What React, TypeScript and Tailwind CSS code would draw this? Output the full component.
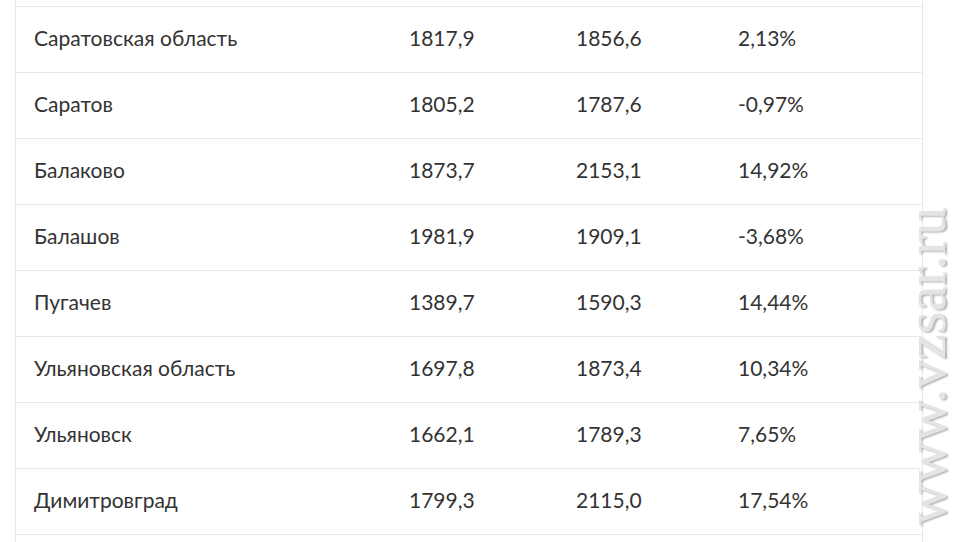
const rows = [
  ['Саратовская область', '1817,9', '1856,6', '2,13%'],
  ['Саратов', '1805,2', '1787,6', '-0,97%'],
  ['Балаково', '1873,7', '2153,1', '14,92%'],
  ['Балашов', '1981,9', '1909,1', '-3,68%'],
  ['Пугачев', '1389,7', '1590,3', '14,44%'],
  ['Ульяновская область', '1697,8', '1873,4', '10,34%'],
  ['Ульяновск', '1662,1', '1789,3', '7,65%'],
  ['Димитровград', '1799,3', '2115,0', '17,54%'],
];

export default function App() {
  return (
    <div className="relative h-[542px] w-[960px] overflow-hidden bg-white font-['Lato','Noto_Sans',sans-serif] text-[21px] text-[#333]">
      <div className="ml-[15px] w-[908px] border-x border-[#e9e9e9]">
        <div className="h-[7px] border-b border-[#e9e9e9]" />
        {rows.map((r) => (
          <div
            key={r[0]}
            className="grid h-[66px] grid-cols-[375px_167px_162px_1fr] items-center border-b border-[#e9e9e9] pb-[4px]"
          >
            {r.map((c, i) => (
              <div key={i} className="pl-[18px]">
                {c}
              </div>
            ))}
          </div>
        ))}
        <div className="h-[20px]" />
      </div>

      {/* watermark */}
      <div className="absolute left-[926px] top-[366px] -translate-x-1/2 -translate-y-1/2 -rotate-90 whitespace-nowrap font-['Liberation_Serif',serif] text-[58px] leading-[40px] text-[#e4e4e4] [text-shadow:-1px_2px_2px_#b0b0b0]">
        www.vzsar.ru
      </div>
    </div>
  );
}
